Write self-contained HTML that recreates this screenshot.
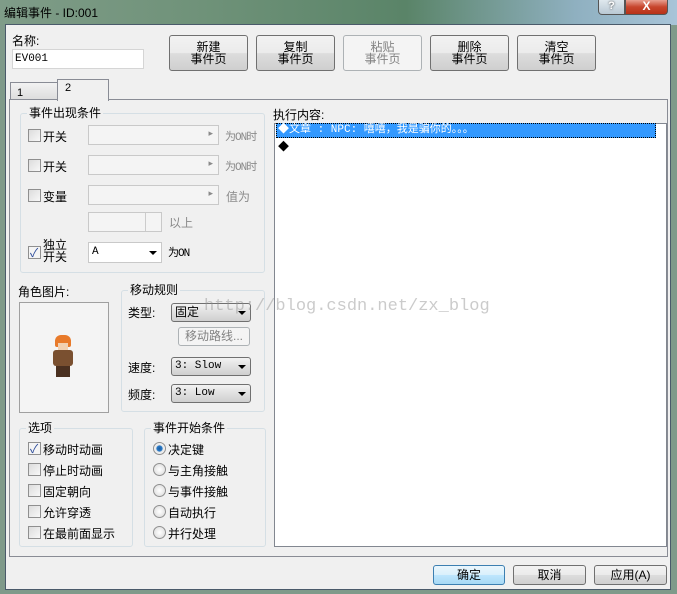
<!DOCTYPE html><html><head><meta charset="utf-8"><style>
*{box-sizing:border-box;margin:0;padding:0}
body{width:677px;height:594px;overflow:hidden;position:relative;background:#7f9a8a;font-family:"Liberation Sans","Noto Sans CJK SC",sans-serif;font-size:12px;color:#000}
.a{position:absolute}
.title{left:0;top:0;width:677px;height:25px;background:linear-gradient(90deg,#7f9c88 0%,#6f9279 30%,#5a8468 60%,#8fb0c0 85%,#a8c4d8 100%)}
.client{left:5px;top:24px;width:666px;height:566px;background:#f0f0f0;border:1px solid #4a5a6a}
.btn{position:absolute;border:1px solid #707070;border-radius:3px;background:linear-gradient(#f2f2f2 0%,#ebebeb 50%,#dddddd 51%,#cfcfcf 100%);text-align:center;line-height:12px}
.dis{border-color:#adb2b5;color:#838383;background:#f4f4f4}
.grp{position:absolute;border:1px solid #d5dfe5;border-radius:3px}
.gl{position:absolute;top:-8px;left:6px;background:#f0f0f0;padding:0 2px;line-height:14px}
.cb{position:absolute;width:13px;height:13px;border:1px solid #8f8f8f;background:linear-gradient(135deg,#dcdcdc,#f8f8f8)}
.rd{position:absolute;width:13px;height:13px;border:1px solid #8f8f8f;border-radius:50%;background:radial-gradient(#fff,#d8d8d8)}
.combo{position:absolute;border:1px solid #c9c9c9;background:#f4f4f4}
.cmb2{position:absolute;border:1px solid #707070;border-radius:3px;background:linear-gradient(#f2f2f2,#e0e0e0 50%,#cfcfcf);font-family:"Liberation Mono","Noto Sans CJK SC",monospace;font-size:11px;line-height:17px;padding-left:3px}
.arr{position:absolute;right:4px;top:7px;border-left:4px solid transparent;border-right:4px solid transparent;border-top:4px solid #000}
.g{color:#8a8a8a}
.m{font-family:"Liberation Mono","Noto Sans CJK SC",monospace;font-size:11px;letter-spacing:-1px}
</style></head><body>
<div class="a title"></div>
<div class="a" style="left:4px;top:4px;font-size:12px;color:#000">编辑事件 - ID:001</div>
<div class="a" style="left:598px;top:0;width:27px;height:15px;border:1px solid #555;border-top:none;border-radius:0 0 0 4px;background:linear-gradient(#dfe8ee,#b9c8d3);color:#fff;text-align:center;font-size:11px;font-weight:bold;line-height:13px;text-shadow:0 0 2px #333">?</div>
<div class="a" style="left:625px;top:0;width:43px;height:15px;border:1px solid #555;border-top:none;border-radius:0 0 4px 0;background:linear-gradient(#e8a090,#c7452c 50%,#b83218);color:#fff;text-align:center;font-size:12px;font-weight:bold;line-height:13px">X</div>
<div class="a client"></div>
<div class="a" style="left:12px;top:32px">名称:</div>
<div class="a" style="left:12px;top:49px;width:132px;height:20px;background:#fff;border:1px solid #d5d5d5;font-family:'Liberation Mono',monospace;font-size:11px;line-height:18px;padding-left:2px">EV001</div>
<div class="btn" style="left:169px;top:35px;width:79px;height:36px;padding-top:5px">新建<br>事件页</div>
<div class="btn" style="left:256px;top:35px;width:79px;height:36px;padding-top:5px">复制<br>事件页</div>
<div class="btn dis" style="left:343px;top:35px;width:79px;height:36px;padding-top:5px">粘贴<br>事件页</div>
<div class="btn" style="left:430px;top:35px;width:79px;height:36px;padding-top:5px">删除<br>事件页</div>
<div class="btn" style="left:517px;top:35px;width:79px;height:36px;padding-top:5px">清空<br>事件页</div>
<div class="a" style="left:10px;top:82px;width:49px;height:18px;border:1px solid #898c95;border-bottom:none;background:linear-gradient(#f2f2f2,#dcdcdc);padding:4px 0 0 6px;font-size:11px">1</div>
<div class="a" style="left:9px;top:99px;width:659px;height:458px;border:1px solid #898c95;background:#fff"></div>
<div class="a" style="left:10px;top:100px;width:657px;height:456px;background:#f0f0f0"></div>
<div class="a" style="left:57px;top:79px;width:52px;height:22px;border:1px solid #898c95;border-bottom:none;background:#f0f0f0;padding:2px 0 0 7px;font-size:11px">2</div>
<div class="grp" style="left:20px;top:113px;width:245px;height:160px"><span class="gl">事件出现条件</span></div>
<div class="cb" style="left:28px;top:129px"></div><div class="a" style="left:43px;top:128px">开关</div>
<div class="combo" style="left:88px;top:125px;width:131px;height:20px"><span class="a g" style="right:5px;top:2px;font-size:9px">▸</span></div><div class="a g m" style="left:225px;top:128px">为ON时</div>
<div class="cb" style="left:28px;top:159px"></div><div class="a" style="left:43px;top:158px">开关</div>
<div class="combo" style="left:88px;top:155px;width:131px;height:20px"><span class="a g" style="right:5px;top:2px;font-size:9px">▸</span></div><div class="a g m" style="left:225px;top:158px">为ON时</div>
<div class="cb" style="left:28px;top:189px"></div><div class="a" style="left:43px;top:188px">变量</div>
<div class="combo" style="left:88px;top:185px;width:131px;height:20px"><span class="a g" style="right:5px;top:2px;font-size:9px">▸</span></div><div class="a g" style="left:226px;top:188px">值为</div>
<div class="combo" style="left:88px;top:212px;width:74px;height:20px"><div class="a" style="right:0;top:0;width:16px;height:18px;border-left:1px solid #ccc"></div></div><div class="a g" style="left:169px;top:214px">以上</div>
<div class="cb" style="left:28px;top:246px;background:#f4f4f4"><span class="a" style="left:1px;top:-3px;color:#2a4a9a;font-size:12px">✓</span></div>
<div class="a" style="left:43px;top:239px;line-height:12px">独立<br>开关</div>
<div class="a" style="left:88px;top:242px;width:74px;height:21px;background:#fff;border:1px solid #c9c9c9;font-family:'Liberation Mono',monospace;font-size:11px;line-height:19px;padding-left:3px">A<div class="arr" style="top:8px"></div></div>
<div class="a m" style="left:168px;top:244px">为ON</div>
<div class="a" style="left:273px;top:106px">执行内容:</div>
<div class="a" style="left:274px;top:123px;width:393px;height:424px;background:#fff;border:1px solid #828790"></div>
<div class="a" style="left:276px;top:123px;width:380px;height:15px;background:#3399ff;border:1px dotted #000;color:#fff;font-family:'Liberation Mono','Noto Sans CJK SC',monospace;font-size:11px;line-height:13px;padding-left:1px">◆文章 : NPC: 嘻嘻，我是骗你的。。。</div>
<div class="a" style="left:278px;top:138px;font-size:11px">◆</div>
<div class="a" style="left:18px;top:283px">角色图片:</div>
<div class="a" style="left:19px;top:302px;width:90px;height:111px;border:1px solid #a0a0a0;background:#f4f4f4"></div>
<div class="a" style="left:55px;top:335px;width:16px;height:12px;background:#e87a2a;border-radius:6px 6px 2px 2px"></div>
<div class="a" style="left:58px;top:343px;width:10px;height:7px;background:#f2d0b0"></div>
<div class="a" style="left:53px;top:350px;width:20px;height:16px;background:#7a5030;border-radius:3px"></div>
<div class="a" style="left:56px;top:366px;width:14px;height:11px;background:#4a3020"></div>
<div class="grp" style="left:121px;top:290px;width:144px;height:122px"><span class="gl">移动规则</span></div>
<div class="a" style="left:128px;top:304px">类型:</div>
<div class="cmb2" style="left:171px;top:303px;width:80px;height:19px;font-family:'Liberation Sans','Noto Sans CJK SC',sans-serif;font-size:12px">固定<div class="arr"></div></div>
<div class="btn dis" style="left:178px;top:327px;width:72px;height:19px;line-height:17px">移动路线...</div>
<div class="a" style="left:128px;top:359px">速度:</div>
<div class="cmb2" style="left:171px;top:357px;width:80px;height:19px">3: Slow<div class="arr"></div></div>
<div class="a" style="left:128px;top:386px">频度:</div>
<div class="cmb2" style="left:171px;top:384px;width:80px;height:19px">3: Low<div class="arr"></div></div>
<div class="grp" style="left:19px;top:428px;width:114px;height:119px"><span class="gl">选项</span></div>
<div class="cb" style="left:28px;top:442px;background:#f4f4f4"><span class="a" style="left:1px;top:-3px;color:#2a4a9a">✓</span></div><div class="a" style="left:43px;top:441px">移动时动画</div>
<div class="cb" style="left:28px;top:463px"></div><div class="a" style="left:43px;top:462px">停止时动画</div>
<div class="cb" style="left:28px;top:484px"></div><div class="a" style="left:43px;top:483px">固定朝向</div>
<div class="cb" style="left:28px;top:505px"></div><div class="a" style="left:43px;top:504px">允许穿透</div>
<div class="cb" style="left:28px;top:526px"></div><div class="a" style="left:43px;top:525px">在最前面显示</div>
<div class="grp" style="left:144px;top:428px;width:122px;height:119px"><span class="gl">事件开始条件</span></div>
<div class="rd" style="left:153px;top:442px;background:radial-gradient(#1d5fa0 0,#2a7ac8 35%,#e8e8e8 45%,#fff)"></div><div class="a" style="left:168px;top:441px">决定键</div>
<div class="rd" style="left:153px;top:463px"></div><div class="a" style="left:168px;top:462px">与主角接触</div>
<div class="rd" style="left:153px;top:484px"></div><div class="a" style="left:168px;top:483px">与事件接触</div>
<div class="rd" style="left:153px;top:505px"></div><div class="a" style="left:168px;top:504px">自动执行</div>
<div class="rd" style="left:153px;top:526px"></div><div class="a" style="left:168px;top:525px">并行处理</div>
<div class="a" style="left:204px;top:297px;font-family:'Liberation Mono',monospace;font-size:17px;color:rgba(140,140,140,0.45)">http://blog.csdn.net/zx_blog</div>
<div class="btn" style="left:433px;top:565px;width:72px;height:20px;line-height:18px;border-color:#3c7fb1;background:linear-gradient(#eaf6fd,#d9f0fc 50%,#bee6fd 51%,#a7d9f5)">确定</div>
<div class="btn" style="left:513px;top:565px;width:73px;height:20px;line-height:18px">取消</div>
<div class="btn" style="left:594px;top:565px;width:73px;height:20px;line-height:18px">应用(A)</div>
</body></html>
